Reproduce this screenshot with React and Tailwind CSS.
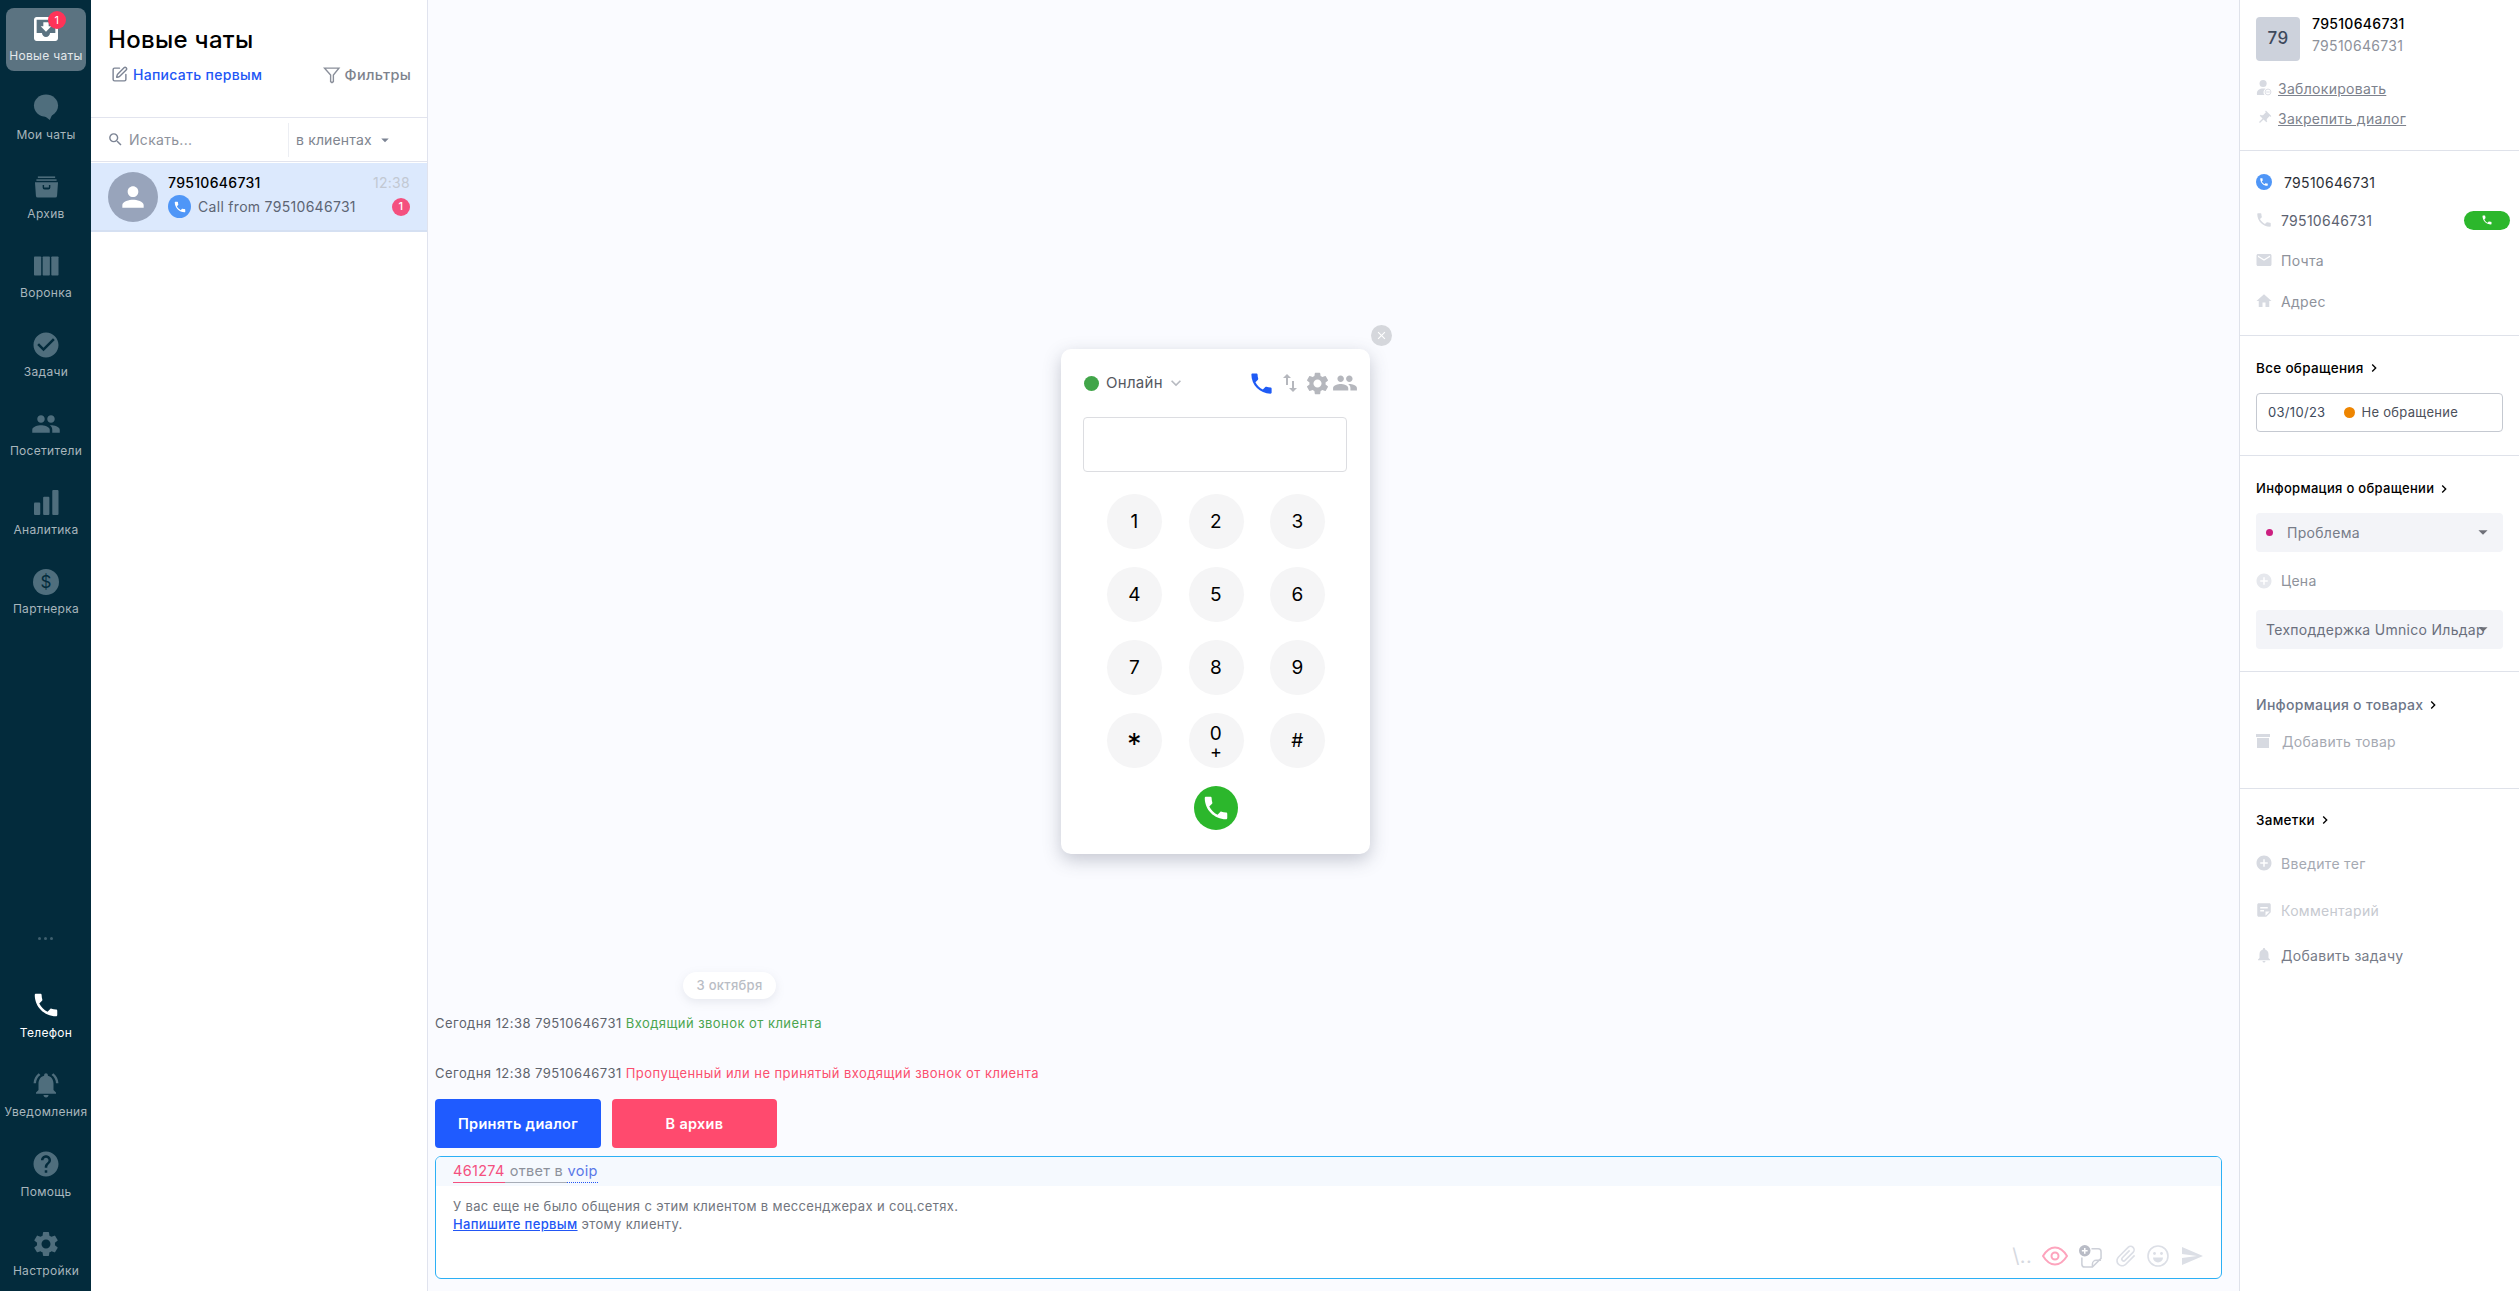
import React from 'react';
import { SquarePen } from 'lucide-react';
import {
  MdMoveToInbox, MdCheckCircle, MdPeople, MdPhone, MdNotificationsActive, MdHelp, MdSettings,
  MdSearch, MdArrowDropDown, MdPerson, MdClose, MdKeyboardArrowDown, MdSwapVert, MdEmail, MdHome, MdPushPin,
  MdAddCircle, MdNotifications, MdChevronRight, MdAttachFile, MdSend, MdStickyNote2,
} from 'react-icons/md';

const font = "font-['Inter','Liberation_Sans',sans-serif]";

const ChatBubble = ({ className }) => (
  <svg viewBox="0 0 26 28" className={className} fill="currentColor">
    <ellipse cx="13" cy="12" rx="12.5" ry="11.5" />
    <path d="M9 21l8 6 3-7z" />
  </svg>
);

const ArchiveTray = ({ className }) => (
  <svg viewBox="0 0 26 22" className={className} fill="currentColor">
    <rect x="4" y="0" width="18" height="1.6" />
    <rect x="2.5" y="3" width="21" height="1.6" />
    <path d="M1 6h24l-1 14a2 2 0 0 1-2 2H4a2 2 0 0 1-2-2z M9 9v2.5a2 2 0 0 0 2 2h4a2 2 0 0 0 2-2V9h-1.5v2.5h-5V9z" fillRule="evenodd" />
  </svg>
);

const Funnel = ({ className }) => (
  <svg viewBox="0 0 26 26" className={className} fill="#fff" stroke="currentColor" strokeWidth="2">
    <path d="M13 24l-2-1.5V13L2 3h21l-8 10v9.5z" />
  </svg>
);

const DollarCircle = ({ className }) => (
  <svg viewBox="0 0 26 26" className={className}>
    <circle cx="13" cy="13" r="13" fill="currentColor" />
    <text x="13" y="19" textAnchor="middle" fontSize="17" fill="#032b3c" fontFamily="Inter, sans-serif">$</text>
  </svg>
);

const Columns = ({ className }) => (
  <svg viewBox="0 0 26 20" className={className} fill="currentColor">
    <rect x="0" y="0" width="7.5" height="20" rx="0.8" />
    <rect x="9" y="0" width="7.5" height="20" rx="0.8" />
    <rect x="18" y="0" width="7.5" height="20" rx="0.8" />
  </svg>
);

const Bars = ({ className }) => (
  <svg viewBox="0 0 26 26" className={className} fill="currentColor">
    <rect x="0" y="13" width="6.5" height="13" rx="1" />
    <rect x="9.5" y="7" width="6.5" height="19" rx="1" />
    <rect x="19" y="0" width="6.5" height="26" rx="1" />
  </svg>
);

const EyeRing = ({ className }) => (
  <svg viewBox="0 0 26 20" className={className} fill="none" stroke="#fda4bd" strokeWidth="2">
    <path d="M1 10C5 3.5 9 1.5 13 1.5S21 3.5 25 10c-4 6.500-8 8.500-12 8.500S5 16.500 1 10z" />
    <circle cx="13" cy="10" r="3.500" />
  </svg>
);

const StickerAdd = ({ className }) => (
  <svg viewBox="0 0 24 24" className={className}>
    <path d="M3 13v7a3 3 0 0 0 3 3h8l9-9V7a3 3 0 0 0-3-3h-7" fill="none" stroke="#cdd0d8" strokeWidth="1.6" />
    <path d="M14 23v-3a4 4 0 0 1 4-4h5" fill="none" stroke="#cdd0d8" strokeWidth="1.6" />
    <circle cx="6" cy="6" r="6" fill="#b9bcc6" />
    <path d="M6 3v6M3 6h6" stroke="#fff" strokeWidth="1.6" />
  </svg>
);

const SmileFace = ({ className }) => (
  <svg viewBox="0 0 22 22" className={className} fill="none" stroke="#dcdfe6" strokeWidth="1.6">
    <circle cx="11" cy="11" r="10" />
    <circle cx="7.500" cy="8.500" r="1.400" fill="#dcdfe6" stroke="none" />
    <circle cx="14.500" cy="8.500" r="1.400" fill="#dcdfe6" stroke="none" />
    <path d="M6 12.500h10a5 5 0 0 1-10 0z" fill="#dcdfe6" stroke="none" />
  </svg>
);

const PersonMinus = ({ className }) => (
  <svg viewBox="0 0 16 18" className={className} fill="currentColor">
    <circle cx="7" cy="4" r="4" />
    <path d="M0 15c0-3.500 3-5.500 7-5.500 1 0 2 .1 2.800.4A4.500 4.500 0 0 0 8.600 17H1a1 1 0 0 1-1-1z" />
    <circle cx="12.500" cy="13.500" r="3.300" fill="none" stroke="currentColor" strokeWidth="1" />
    <rect x="10.500" y="13" width="4" height="1" />
  </svg>
);

const topNav = [
  { label: 'Новые чаты', icon: MdMoveToInbox, size: 'h-[32px] w-[32px]', active: true },
  { label: 'Мои чаты', icon: ChatBubble, size: 'h-[27px] w-[26px]' },
  { label: 'Архив', icon: ArchiveTray, size: 'h-[22px] w-[25px]' },
  { label: 'Воронка', icon: Columns, size: 'h-[20px] w-[25px]' },
  { label: 'Задачи', icon: MdCheckCircle, size: 'h-[30px] w-[30px]' },
  { label: 'Посетители', icon: MdPeople, size: 'h-[30px] w-[30px]' },
  { label: 'Аналитика', icon: Bars, size: 'h-[25px] w-[25px]' },
  { label: 'Партнерка', icon: DollarCircle, size: 'h-[26px] w-[26px]' },
];

const bottomNav = [
  { label: 'Телефон', icon: MdPhone, size: 'h-[30px] w-[30px]', on: true },
  { label: 'Уведомления', icon: MdNotificationsActive, size: 'h-[30px] w-[30px]' },
  { label: 'Помощь', icon: MdHelp, size: 'h-[30px] w-[30px]' },
  { label: 'Настройки', icon: MdSettings, size: 'h-[30px] w-[30px]' },
];

const NavItem = ({ item }) => {
  const Icon = item.icon;
  const light = item.active || item.on;
  return (
    <div className={`relative mx-[6px] flex h-[63px] w-[80px] flex-col items-center rounded-lg ${item.active ? 'bg-[#5b7381]' : ''}`}>
      <div className={`flex h-[41px] items-center justify-center ${light ? 'text-white' : 'text-[#4f6e7d]'}`}>
        <Icon className={item.size} />
      </div>
      <span className={`whitespace-nowrap text-[12px] leading-[14px] ${item.on ? 'text-white' : item.active ? 'text-[#e3e8eb]' : 'text-[#a8b6bd]'}`}>
        {item.label}
      </span>
      {item.active && (
        <span className="absolute left-[42px] top-[3px] flex h-[18px] w-[18px] items-center justify-center rounded-full bg-[#ff3358] text-[11px] text-white">1</span>
      )}
    </div>
  );
};

const Sidebar = () => (
  <aside className="flex h-full w-[91px] shrink-0 flex-col bg-[#032b3c] pt-2">
    <div className="flex flex-col gap-4">
      {topNav.map((item) => <NavItem key={item.label} item={item} />)}
    </div>
    <div className="mb-[45px] mt-auto flex justify-center gap-[3px]">
      <span className="h-[3px] w-[3px] rounded-full bg-[#3f5f6e]" />
      <span className="h-[3px] w-[3px] rounded-full bg-[#3f5f6e]" />
      <span className="h-[3px] w-[3px] rounded-full bg-[#3f5f6e]" />
    </div>
    <div className="flex flex-col gap-[16.5px] pb-[5px]">
      {bottomNav.map((item) => <NavItem key={item.label} item={item} />)}
    </div>
  </aside>
);

const ChatList = () => (
  <section className="flex h-full w-[337px] shrink-0 flex-col border-r border-[#e0e3ee] bg-white">
    <div className="h-[117px] pl-[17px] pr-[16px]">
      <h1 className="pt-[24px] text-[24px] font-medium leading-[32px] text-black">Новые чаты</h1>
      <div className="mt-[8px] flex items-center justify-between">
        <div className="flex items-center gap-[5px] pl-[3px]">
          <SquarePen className="h-[17px] w-[17px] text-[#7c8494]" />
          <span className="text-[14px] font-medium text-[#2256f5]">Написать первым</span>
        </div>
        <div className="flex items-center gap-[4px]">
          <Funnel className="h-[18px] w-[18px] text-[#8a8f9a]" />
          <span className="text-[14.5px] font-medium text-[#7d828d]">Фильтры</span>
        </div>
      </div>
    </div>
    <div className="flex h-[45px] items-center border-y border-[#e2e4ee]">
      <div className="flex h-[34px] w-[198px] items-center gap-[5px] border-r border-[#eceef3] pl-[16px]">
        <MdSearch className="h-[17px] w-[17px] text-[#7c8494]" />
        <span className="text-[14px] text-[#8e929b]">Искать...</span>
      </div>
      <div className="flex items-center gap-[4px] pl-[7px]">
        <span className="text-[14px] tracking-[0.15px] text-[#80858f]">в клиентах</span>
        <MdArrowDropDown className="h-[18px] w-[18px] text-[#7c8494]" />
      </div>
    </div>
    <div className="mt-[1px] flex h-[69px] items-center border-b-2 border-[#d5e0f2] bg-[#dce9fd] pl-[17px] pr-[17px]">
      <div className="flex h-[50px] w-[50px] shrink-0 items-center justify-center rounded-full bg-[#98a4bb]">
        <MdPerson className="h-[32px] w-[32px] text-white" />
      </div>
      <div className="ml-[10px] min-w-0 flex-1">
        <div className="flex items-center justify-between">
          <span className="mt-[-2px] text-[14px] font-medium leading-[20px] text-black">79510646731</span>
          <span className="mt-[-2px] text-[14px] leading-[20px] text-[#c2c8d2]">12:38</span>
        </div>
        <div className="mt-[2px] flex items-center justify-between">
          <div className="flex items-center gap-[7px]">
            <span className="flex h-[23px] w-[23px] items-center justify-center rounded-full bg-[#4f96f7]">
              <MdPhone className="h-[14px] w-[14px] text-white" />
            </span>
            <span className="text-[14px] text-[#5d6574]">Call from 79510646731</span>
          </div>
          <span className="flex h-[18px] w-[18px] items-center justify-center rounded-full bg-[#f4507f] text-[11px] font-medium text-white">1</span>
        </div>
      </div>
    </div>
  </section>
);

const keys = ['1', '2', '3', '4', '5', '6', '7', '8', '9', '*', '0', '#'];

const Dialer = () => (
  <div className="absolute left-[633px] top-[349px] h-[505px] w-[309px] rounded-[10px] bg-white px-[23px] pt-[22px] shadow-[0_6px_18px_rgba(60,70,90,0.28)]">
    <button className="absolute right-[-22px] top-[-24px] flex h-[21px] w-[21px] items-center justify-center rounded-full bg-[#d5d7dc]">
      <MdClose className="h-[13px] w-[13px] text-white" />
    </button>
    <div className="flex h-[24px] items-center justify-between">
      <div className="flex items-center">
        <span className="h-[15px] w-[15px] rounded-full bg-[#41a549]" />
        <span className="ml-[7px] text-[15px] text-[#55585f]">Онлайн</span>
        <MdKeyboardArrowDown className="ml-[3px] h-[20px] w-[20px] text-[#b7bac1]" />
      </div>
      <div className="mr-[-11px] flex items-center">
        <MdPhone className="h-[27px] w-[27px] text-[#1f5bf5]" />
        <MdSwapVert className="ml-[3px] h-[24px] w-[24px] text-[#b5b7bd]" />
        <MdSettings className="ml-[2px] h-[27px] w-[27px] text-[#b5b7bd]" />
        <MdPeople className="ml-[1px] h-[26px] w-[26px] text-[#b5b7bd]" />
      </div>
    </div>
    <div className="ml-[-1px] mt-[22px] h-[55px] w-[264px] rounded-[4px] border border-[#dcdde1]" />
    <div className="ml-[23px] mt-[22px] grid w-[218px] grid-cols-[55px_55px_55px] gap-x-[26.5px] gap-y-[18px]">
      {keys.map((key) => (
        <div key={key} className="flex h-[55px] w-[55px] flex-col items-center justify-center rounded-full bg-[#f5f5f6] text-black">
          <span className={key === '*' ? 'pt-[7px] text-[29px] leading-[26px]' : 'text-[19px] leading-[22px]'}>{key}</span>
          {key === '0' && <span className="text-[18px] leading-[14px]">+</span>}
        </div>
      ))}
    </div>
    <div className="mt-[18px] flex justify-center">
      <div className="flex h-[44px] w-[44px] items-center justify-center rounded-full bg-[#2cb72c]">
        <MdPhone className="h-[30px] w-[30px] text-white" />
      </div>
    </div>
  </div>
);

const ChatPane = () => (
  <main className="relative flex h-full min-w-0 flex-1 flex-col justify-end bg-[#fafbff] pb-[12px] pl-[7px] pr-[17px]">
    <Dialer />
    <div className="ml-[248px] flex h-[27px] w-[93px] items-center justify-center rounded-full bg-white text-[13px] font-medium text-[#b9bdc5] shadow-[0_3px_10px_rgba(120,130,150,0.15)]">
      3 октября
    </div>
    <div className="mt-[14px] h-[20px] text-[13px] leading-[20px] tracking-[0.45px] text-[#5e636d]">
      Сегодня 12:38 79510646731 <span className="text-[#4aa54f]">Входящий звонок от клиента</span>
    </div>
    <div className="mt-[30px] h-[20px] text-[13px] leading-[20px] tracking-[0.45px] text-[#5e636d]">
      Сегодня 12:38 79510646731 <span className="text-[#fb4f6f]">Пропущенный или не принятый входящий звонок от клиента</span>
    </div>
    <div className="mt-[16px] flex gap-[11px]">
      <button className="h-[49px] w-[166px] rounded-[4px] bg-[#1f5bff] text-[14.5px] font-semibold text-white">Принять диалог</button>
      <button className="h-[49px] w-[165px] rounded-[4px] bg-[#ff4a6e] text-[14.5px] font-semibold text-white">В архив</button>
    </div>
    <div className="mt-[8px] flex h-[123px] flex-col overflow-hidden rounded-[6px] border border-[#2cb0f5] bg-white">
      <div className="flex h-[29px] shrink-0 items-center bg-[#f5f9fe] pl-[17px] text-[14.5px]">
        <span className="border-b border-[#f4507f] text-[#f4507f]">461274</span>
        <span className="border-b border-[#a8adb7] pl-[5px] text-[#8c919b]">ответ в&nbsp;</span>
        <span className="border-b border-dotted border-[#2256f5] text-[#5a78e8]">voip</span>
      </div>
      <div className="px-[17px] pt-[11px] text-[13px] leading-[18px] tracking-[0.35px] text-[#71757e]">
        <p>У вас еще не было общения с этим клиентом в мессенджерах и соц.сетях.</p>
        <p><span className="font-medium text-[#2256f5] underline">Напишите первым</span> этому клиенту.</p>
      </div>
      <div className="mt-auto flex items-center justify-end pb-[9px] pr-[17px]">
        <span className="mr-[10px] text-[20px] leading-[24px] text-[#d6d9df]">\..</span>
        <EyeRing className="mr-[11px] h-[20px] w-[26px]" />
        <StickerAdd className="mr-[11px] h-[23px] w-[23px]" />
        <MdAttachFile className="mr-[8px] h-[26px] w-[26px] rotate-45 text-[#dcdfe6]" />
        <SmileFace className="mr-[11px] h-[22px] w-[22px]" />
        <MdSend className="h-[24px] w-[24px] text-[#dcdfe6]" />
      </div>
    </div>
  </main>
);

const InfoRow = ({ icon: Icon, label, h, text = 'text-[#8e929b]', iconColor = 'text-[#d7dae1]', children }) => (
  <div className={`flex items-center ${h}`}>
    <Icon className={`ml-[-1px] h-[18px] w-[18px] shrink-0 ${iconColor}`} />
    <span className={`ml-[8px] text-[14px] ${text}`}>{label}</span>
    {children}
  </div>
);

const SectionTitle = ({ children, color = 'text-black', size = 'text-[13.5px]' }) => (
  <div className={`flex items-center font-medium ${size} ${color}`}>
    {children}
    <MdChevronRight className="ml-[2px] h-[16px] w-[16px] text-black" />
  </div>
);

const RightPanel = () => (
  <aside className="h-full w-[280px] shrink-0 border-l border-[#dfe2ea] bg-white">
    <div className="h-[151px] border-b border-[#dfe2ea] px-4 pt-[13px]">
      <div className="flex pt-[4px]">
        <div className="flex h-[44px] w-[44px] items-center justify-center rounded-[4px] bg-[#cdd2dc] text-[17px] font-medium text-[#3e4a5c]">79</div>
        <div className="ml-[12px] mt-[-4px] text-[14px] leading-[22px]">
          <div className="font-medium text-black">79510646731</div>
          <div className="text-[#8e929b]">79510646731</div>
        </div>
      </div>
      <div className="mt-[17px] flex h-[20px] items-center">
        <PersonMinus className="h-[16px] w-[16px] text-[#d7dae1]" />
        <span className="ml-[6px] text-[14px] text-[#7d828d] underline">Заблокировать</span>
      </div>
      <div className="mt-[10px] flex h-[20px] items-center">
        <MdPushPin className="h-[16px] w-[16px] rotate-45 text-[#d7dae1]" />
        <span className="ml-[6px] text-[14px] text-[#7d828d] underline">Закрепить диалог</span>
      </div>
    </div>
    <div className="h-[185px] border-b border-[#dfe2ea] px-4 pt-[20px]">
      <div className="flex h-[22px] items-center">
        <span className="flex h-[16px] w-[16px] items-center justify-center rounded-full bg-[#4f96f7]">
          <MdPhone className="h-[10px] w-[10px] text-white" />
        </span>
        <span className="ml-[12px] text-[14px] text-[#2c2f36]">79510646731</span>
      </div>
      <div className="mt-[16px]">
        <InfoRow icon={MdPhone} label="79510646731" h="h-[22px]" text="text-[#5c6270]">
          <span className="ml-auto mr-[-7px] flex h-[19px] w-[46px] items-center justify-center rounded-full bg-[#2cb72c]">
            <MdPhone className="h-[12px] w-[12px] text-white" />
          </span>
        </InfoRow>
      </div>
      <div className="mt-[18px]">
        <InfoRow icon={MdEmail} label="Почта" h="h-[22px]" />
      </div>
      <div className="mt-[19px]">
        <InfoRow icon={MdHome} label="Адрес" h="h-[22px]" />
      </div>
    </div>
    <div className="h-[120px] border-b border-[#dfe2ea] px-4 pt-[22px]">
      <SectionTitle>Все обращения</SectionTitle>
      <div className="mt-[15px] flex h-[39px] items-center rounded-[4px] border border-[#c5c9d1] pl-[11px] text-[13px]">
        <span className="text-[#3e4a5c]">03/10/23</span>
        <span className="ml-[19px] h-[11px] w-[11px] rounded-full bg-[#ee8500]" />
        <span className="ml-[6px] text-[#4c505a]">Не обращение</span>
      </div>
    </div>
    <div className="h-[216px] border-b border-[#dfe2ea] px-4 pt-[23px]">
      <SectionTitle size="text-[13px]">Информация о обращении</SectionTitle>
      <div className="mt-[14px] flex h-[39px] items-center rounded-[4px] bg-[#f3f4f8] pl-[10px] pr-[9px]">
        <span className="h-[7px] w-[7px] rounded-full bg-[#cc1f80]" />
        <span className="ml-[14px] text-[14px] text-[#777c88]">Проблема</span>
        <MdArrowDropDown className="ml-auto h-[22px] w-[22px] text-[#6e7078]" />
      </div>
      <div className="mt-[19px]">
        <InfoRow icon={MdAddCircle} label="Цена" h="h-[20px]" iconColor="text-[#e6e8ed]" />
      </div>
      <div className="relative mt-[19px] flex h-[39px] items-center overflow-hidden rounded-[4px] bg-[#f3f4f8] pl-[10px]">
        <span className="whitespace-nowrap text-[14px] text-[#6a6f7d]">Техподдержка Umnico Ильдар</span>
        <MdArrowDropDown className="absolute right-[9px] h-[22px] w-[22px] text-[#6e7078]" />
      </div>
    </div>
    <div className="h-[117px] border-b border-[#dfe2ea] px-4 pt-[22px]">
      <SectionTitle color="text-[#6d7688]" size="text-[14px]">Информация о товарах</SectionTitle>
      <div className="mt-[16px] flex h-[20px] items-center">
        <svg viewBox="0 0 14 14" className="h-[14px] w-[14px] text-[#d7dae1]" fill="currentColor">
          <rect x="0" y="0" width="14" height="3" />
          <rect x="1" y="4" width="12" height="10" />
        </svg>
        <span className="ml-[12px] text-[14px] text-[#a5a9b2]">Добавить товар</span>
      </div>
    </div>
    <div className="px-4 pt-[21px]">
      <SectionTitle>Заметки</SectionTitle>
      <div className="mt-[23px]">
        <InfoRow icon={MdAddCircle} label="Введите тег" h="h-[20px]" text="text-[#a5a9b2]" />
      </div>
      <div className="mt-[27px]">
        <InfoRow icon={MdStickyNote2} label="Комментарий" h="h-[20px]" text="text-[#c6c9d0]" />
      </div>
      <div className="mt-[25px]">
        <InfoRow icon={MdNotifications} label="Добавить задачу" h="h-[20px]" text="text-[#777c88]" />
      </div>
    </div>
  </aside>
);

const App = () => (
  <div className={`flex h-[1291px] w-full overflow-hidden tracking-[0.3px] ${font}`}>
    <Sidebar />
    <ChatList />
    <ChatPane />
    <RightPanel />
  </div>
);

export default App;
